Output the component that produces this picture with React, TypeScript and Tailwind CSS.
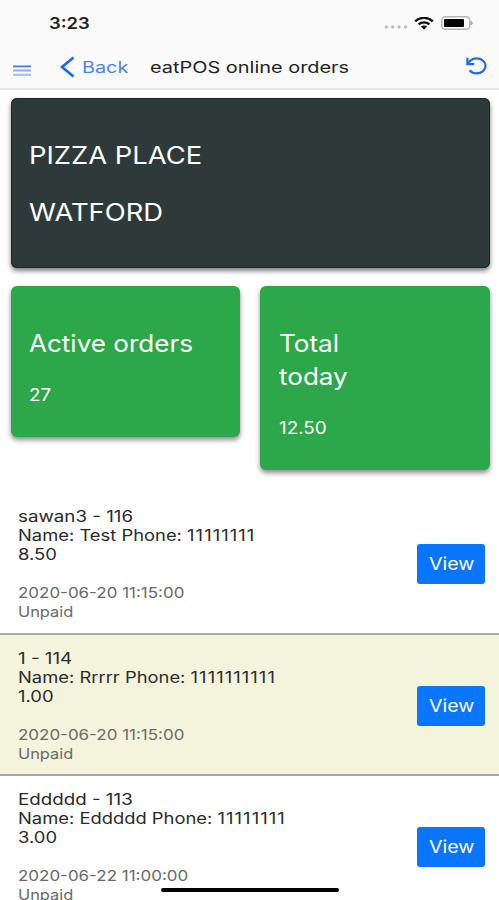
import type { ReactNode } from "react";

const orders = [
  { title: "sawan3 - 116", name: "Test", phone: "11111111", total: "8.50", date: "2020-06-20 11:15:00" },
  { title: "1 - 114", name: "Rrrrr", phone: "1111111111", total: "1.00", date: "2020-06-20 11:15:00" },
  { title: "Eddddd - 113", name: "Eddddd", phone: "11111111", total: "3.00", date: "2020-06-22 11:00:00" },
];

// Slightly extended lettering, anchored to its left edge.
function Wide({ children, className = "scale-x-[1.15]" }: { children: ReactNode; className?: string }) {
  return <span className={`block w-max origin-left ${className}`}>{children}</span>;
}

function StatusBar() {
  return (
    <div className="flex h-[46px] items-center pl-[49px] pr-[28px] text-[16px] font-semibold text-[#222]">
      <Wide>3:23</Wide>
      <div className="ml-auto flex items-center">
        <svg width="24" height="4" viewBox="0 0 24 4" className="mt-[8px] fill-[#bdbdbf]">
          <circle cx="2.3" cy="2" r="1.7" />
          <circle cx="8.7" cy="2" r="1.7" />
          <circle cx="15.1" cy="2" r="1.7" />
          <circle cx="21.5" cy="2" r="1.7" />
        </svg>
        <svg width="20" height="13" viewBox="0 0 20 13" fill="none" stroke="#111" strokeWidth="2.3" className="ml-[6px]">
          <path d="M1.2 4.3C6.2-.3 13.8-.3 18.8 4.3" />
          <path d="M4.6 7.4C7.7 4.7 12.3 4.7 15.4 7.4" />
          <path d="M6.9 9.6C8.8 8.2 11.2 8.2 13.1 9.6L10 12.7Z" fill="#111" stroke="none" />
        </svg>
        <svg width="32" height="14" viewBox="0 0 32 14" className="ml-[7px] -mr-[2px]">
          <rect x=".8" y=".8" width="28" height="12.4" rx="3.5" fill="#fff" stroke="#b4b4b6" strokeWidth="1.4" />
          <rect x="3" y="3" width="20" height="8" rx="1" fill="#050505" />
          <path d="M29.5 4.5Q31.8 5.5 31.8 7T29.5 9.5Z" fill="#a8a8aa" />
        </svg>
      </div>
    </div>
  );
}

function NavBar() {
  return (
    <div className="flex h-[41px] items-center pl-[13px] pr-[12px] text-[16px]">
      <svg width="18" height="12" viewBox="0 0 18 12" className="mt-[8px] shrink-0">
        <path d="M0 1.4h18" stroke="#3f7bf2" strokeWidth="1.8" />
        <path d="M0 5.5h18" stroke="#8fabf5" strokeWidth="2" />
        <path d="M0 9.8h18" stroke="#aebff8" strokeWidth="2.3" />
      </svg>
      <svg width="15" height="22" viewBox="0 0 15 22" fill="none" stroke="#1768f3" strokeWidth="2.6" className="ml-[29px] shrink-0">
        <path d="M13.5 1.5L2 11l11.5 9.5" />
      </svg>
      <div className="ml-[7px] w-[68px] text-[#4b83ee]">
        <Wide className="scale-x-[1.24]">Back</Wide>
      </div>
      <div className="text-[#222]">
        <Wide className="scale-x-[1.245]">eatPOS online orders</Wide>
      </div>
      <svg width="22" height="18" viewBox="0 0 22 18" fill="none" stroke="#1c6df5" strokeWidth="2.2" className="-mt-px ml-auto shrink-0">
        <path d="M2.4.8v6.3h6.8" />
        <path d="M2.6 6.6C5.5 2.7 8.4 1.4 11.4 1.4c5.4 0 9.2 3.3 9.2 7.4s-3.8 7.6-9.2 7.6c-3.3 0-5.3-1.2-6.8-3.1" />
      </svg>
    </div>
  );
}

function StatCard({ label, value }: { label: ReactNode; value: string }) {
  return (
    <div className="flex-1 rounded-[6px] bg-[#2ca84a] pb-[31px] pl-[18.5px] pt-[41px] text-white shadow-[0_3px_5px_rgba(0,0,0,0.45)]">
      <div className="text-[24px] leading-[33px]">
        <Wide className="scale-x-[1.085]">{label}</Wide>
      </div>
      <div className="mt-[24px] text-[17px] leading-[22px]">
        <Wide className="scale-x-[1.11]">{value}</Wide>
      </div>
    </div>
  );
}

export default function App() {
  return (
    <div className="relative h-[900px] w-[499px] overflow-hidden bg-white font-['Inter',sans-serif]">
      <header className="h-[90px] border-b-2 border-[#e6e6e7] bg-[#fafafb]">
        <StatusBar />
        <NavBar />
      </header>

      <section className="ml-[10.5px] mr-[9.5px] mt-[8px] h-[170px] rounded-[6px] bg-[#2e3a3a] pl-[18.5px] pt-[42px] text-[24px] leading-[32px] text-white shadow-[0_3px_5px_rgba(0,0,0,0.5),inset_0_0_0_1px_#1c2828]">
        <Wide className="scale-x-[1.14]">PIZZA PLACE</Wide>
        <div className="mt-[25px]">
          <Wide className="scale-x-[1.14]">WATFORD</Wide>
        </div>
      </section>

      <section className="ml-[10.5px] mr-[9.5px] mt-[18px] flex h-[184px] items-start gap-[20px]">
        <StatCard label="Active orders" value="27" />
        <StatCard label={<>Total<br />today</>} value="12.50" />
      </section>

      <ul className="mt-[23.25px]">
        {orders.map((order, i) => (
          <li
            key={order.title}
            className={`flex h-[141.5px] items-center justify-between border-b-2 border-[#a9a9ac] pl-[18px] pr-[14px] pt-[2px] ${i % 2 ? "bg-[#f4f4dc]" : "bg-white"}`}
          >
            <div className="text-[15.5px] leading-[19px] text-[#2b2b2b]">
              <Wide className="scale-x-[1.21]">{order.title}</Wide>
              <Wide className="scale-x-[1.185]">
                Name: {order.name} Phone: <span className="tracking-[0.9px]">{order.phone}</span>
              </Wide>
              <Wide className="scale-x-[1.19]">{order.total}</Wide>
              <div className="mt-[19px] text-[14.5px] text-[#6a6a6a]">
                <Wide className="scale-x-[1.17]">{order.date}</Wide>
                <Wide className="scale-x-[1.13]">Unpaid</Wide>
              </div>
            </div>
            <button className="h-[40px] w-[68px] rounded-[3px] bg-[#0a75fd] pl-[12px] pt-[2px] text-[17px] text-white">
              <Wide>View</Wide>
            </button>
          </li>
        ))}
      </ul>

      {/* home indicator */}
      <div className="absolute bottom-[8px] left-[161px] h-[4px] w-[178px] rounded-full bg-black" />
    </div>
  );
}
